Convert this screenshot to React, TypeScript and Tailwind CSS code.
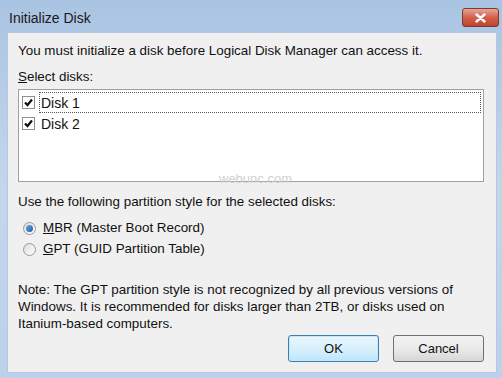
import React from 'react';

const font = { fontFamily: '"Liberation Sans", Arial, sans-serif' };

function CheckBox() {
  return (
    <span className="w-[13px] h-[13px] border border-[#8f8f8f] bg-white flex items-center justify-center shrink-0">
      <svg width="9" height="9" viewBox="0 0 9 9">
        <path d="M1 4.5 L3.5 7 L8 1.5" stroke="#111" strokeWidth="2.2" fill="none" />
      </svg>
    </span>
  );
}

function Radio({ checked }: { checked?: boolean }) {
  return (
    <span className="w-[13px] h-[13px] rounded-full border border-[#9a9a9a] bg-gradient-to-br from-[#dcdcdc] to-white flex items-center justify-center shrink-0">
      {checked && <span className="w-[7px] h-[7px] rounded-full bg-gradient-to-br from-[#6aa7e0] to-[#1d5aa8]" />}
    </span>
  );
}

export default function App() {
  return (
    <div className="w-[502px] h-[378px] bg-gradient-to-b from-[#a9c4e2] via-[#c4d6ec] to-[#bcd1ea] flex flex-col text-[#111]" style={font}>
      {/* title bar */}
      <div className="h-[32px] flex items-start justify-between pl-[9px] pr-[3px] pt-[8px]">
        <span className="text-[14px] leading-[20px] text-[#1a1a1a]">Initialize Disk</span>
        <span className="w-[37px] h-[19px] rounded-[3px] border border-[#7a3a30] bg-gradient-to-b from-[#e6a596] via-[#d2604a] to-[#c0432c] flex items-center justify-center">
          <svg width="11" height="10" viewBox="0 0 11 10">
            <path d="M1.5 1.5 L9.5 8.5 M9.5 1.5 L1.5 8.5" stroke="#fff" strokeWidth="2.4" strokeLinecap="round" />
          </svg>
        </span>
      </div>
      {/* client area */}
      <div className="ml-[7px] mr-[5px] h-[341px] bg-[#f0f0f0] border border-[#b8c8dc] flex flex-col pl-[10px] pr-[12px] text-[13.4px] leading-[16px]">
        <div className="mt-[10px]">You must initialize a disk before Logical Disk Manager can access it.</div>
        <div className="mt-[10px]"><span className="underline">S</span>elect disks:</div>
        <div className="mt-[4px] h-[93px] w-[466px] bg-white border border-[#a0a0a0] relative p-[2px]">
          <div className="flex items-center gap-[4px] h-[21px] pl-[1px]">
            <CheckBox />
            <div className="flex-1 h-[21px] border border-dotted border-[#555] flex items-center pl-[1px] text-[14px]">Disk 1</div>
          </div>
          <div className="flex items-center gap-[4px] h-[21px] pl-[1px]">
            <CheckBox />
            <div className="pl-[2px] text-[14px]">Disk 2</div>
          </div>
          <div className="absolute left-[200px] top-[81px] text-[13px] text-[#d0d0d0]">webunc.com</div>
        </div>
        <div className="mt-[12px]">Use the following partition style for the selected disks:</div>
        <div className="mt-[8px] flex items-center gap-[7px] pl-[5px] h-[20px]">
          <Radio checked />
          <span><span className="underline">M</span>BR (Master Boot Record)</span>
        </div>
        <div className="mt-[1px] flex items-center gap-[7px] pl-[5px] h-[20px]">
          <Radio />
          <span><span className="underline">G</span>PT (GUID Partition Table)</span>
        </div>
        <div className="mt-[22px] leading-[17px]">
          Note: The GPT partition style is not recognized by all previous versions of<br />
          Windows. It is recommended for disks larger than 2TB, or disks used on<br />
          Itanium-based computers.
        </div>
        <div className="mt-[3px] flex justify-end gap-[14px]">
          <button className="w-[91px] h-[27px] rounded-[3px] border border-[#3c7fb1] bg-gradient-to-b from-[#eaf6fd] via-[#d9f0fc] to-[#bee6fd] text-[13px] shadow-[inset_0_0_0_1px_#c8e8fa]">OK</button>
          <button className="w-[91px] h-[27px] rounded-[3px] border border-[#707070] bg-gradient-to-b from-[#f2f2f2] via-[#ebebeb] to-[#d6d6d6] text-[13px]">Cancel</button>
        </div>
      </div>
    </div>
  );
}
